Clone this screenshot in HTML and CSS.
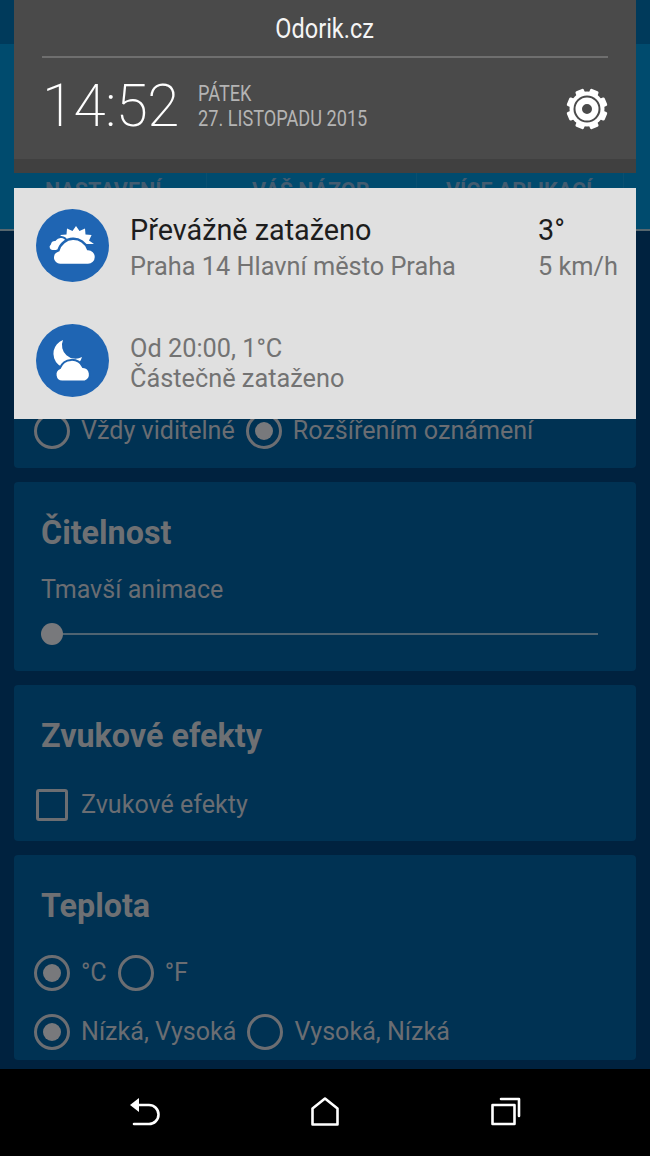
FILE: index.html
```html
<!DOCTYPE html>
<html lang="cs">
<head>
  <meta charset="UTF-8">
  <meta name="viewport" content="width=device-width, initial-scale=1.0">
  <title>Odorik.cz</title>
  <link rel="stylesheet" href="styles.css">
</head>
<body>
  <div class="app">
    <div class="top-bar"></div>
    <div class="tabs">
      <div class="tab tab-first">NASTAVENÍ</div>
      <div class="tab tab-second">VÁŠ NÁZOR</div>
      <div class="tab tab-third">VÍCE APLIKACÍ</div>
    </div>

    <div class="cards">
      <section class="card card-display">
        <div class="radio-row">
          <span class="radio"></span><span class="label">Vždy viditelné</span>
          <span class="radio checked"></span><span class="label">Rozšířením oznámení</span>
        </div>
      </section>

      <section class="card card-read">
        <h2 class="card-title">Čitelnost</h2>
        <p class="label slider-label">Tmavší animace</p>
        <div class="slider"><span class="slider-thumb"></span></div>
      </section>

      <section class="card card-sound">
        <h2 class="card-title">Zvukové efekty</h2>
        <div class="check-row">
          <span class="checkbox"></span><span class="label">Zvukové efekty</span>
        </div>
      </section>

      <section class="card card-temp">
        <h2 class="card-title">Teplota</h2>
        <div class="radio-row">
          <span class="radio checked"></span><span class="label">°C</span>
          <span class="radio"></span><span class="label">°F</span>
        </div>
        <div class="radio-row radio-row-last">
          <span class="radio checked"></span><span class="label">Nízká, Vysoká</span>
          <span class="radio"></span><span class="label">Vysoká, Nízká</span>
        </div>
      </section>
    </div>
  </div>

  <!-- Notification shade over the app -->
  <div class="shade">
    <div class="shade-panel">
      <div class="shade-title"><span class="narrow">Odorik.cz</span></div>
      <div class="shade-info">
        <div class="clock">14:52</div>
        <div class="date">
          <span class="narrow">PÁTEK</span>
          <span class="narrow">27. LISTOPADU 2015</span>
        </div>
        <svg class="gear" viewBox="0 0 42 42" width="42" height="42">
          <g fill="#fff">
            <rect x="16.5" y="0.5" width="9" height="41" rx="1.5" transform="rotate(22.5 21 21)"/>
            <rect x="16.5" y="0.5" width="9" height="41" rx="1.5" transform="rotate(67.5 21 21)"/>
            <rect x="16.5" y="0.5" width="9" height="41" rx="1.5" transform="rotate(112.5 21 21)"/>
            <rect x="16.5" y="0.5" width="9" height="41" rx="1.5" transform="rotate(157.5 21 21)"/>
            <circle cx="21" cy="21" r="17.5"/>
          </g>
          <circle cx="21" cy="21" r="13.5" fill="#4a4a4a"/>
          <circle cx="21" cy="21" r="8.25" fill="none" stroke="#fff" stroke-width="6.5"/>
        </svg>
      </div>
      <div class="shade-strip"></div>
    </div>

    <div class="weather">
      <div class="weather-row weather-now">
        <svg class="weather-icon" viewBox="0 0 73 73" width="73" height="73">
          <circle cx="36.5" cy="36.5" r="36.5" fill="#1f65b3"/>
          <polygon points="40,35 27,31.5 24.4,26 30.5,25.5 31,19.4 36.5,22 40,17 43.5,22 49,19.4 49.5,25.5 55.6,26 53,31.5 58,35" fill="#fff"/>
          <path d="M17 42a4 4 0 0 1-3-7 5 5 0 0 1 5-4 7 7 0 0 1 12 1 5 5 0 0 1 1 10z" fill="#fff" stroke="#1f65b3" stroke-width="2"/>
          <path d="M24 56a7.500 7.500 0 0 1-1.500-14.800A15.500 15.500 0 0 1 52 40A8 8 0 0 1 52 56z" fill="#fff" stroke="#1f65b3" stroke-width="2.500"/>
        </svg>
        <div class="weather-text">
          <div class="weather-title">Převážně zataženo</div>
          <div class="weather-sub">Praha 14 Hlavní město Praha</div>
        </div>
        <div class="weather-side">
          <div class="weather-title">3°</div>
          <div class="weather-sub">5 km/h</div>
        </div>
      </div>
      <div class="weather-row weather-next">
        <svg class="weather-icon" viewBox="0 0 73 73" width="73" height="73">
          <circle cx="36.5" cy="36.5" r="36.5" fill="#1f65b3"/>
          <path d="M27 16A14.500 14.500 0 1 0 46 33A13.500 13.500 0 0 1 27 16z" fill="#fff"/>
          <path d="M26 57.500A7 7 0 0 1 24 44A12.500 12.500 0 0 1 47 43A7.500 7.500 0 0 1 49 57.500z" fill="#fff" stroke="#1f65b3" stroke-width="2"/>
        </svg>
        <div class="weather-text">
          <div class="weather-sub">Od 20:00, 1°C</div>
          <div class="weather-sub">Částečně zataženo</div>
        </div>
      </div>
    </div>
  </div>

  <nav class="nav-bar">
    <svg class="nav-icon" viewBox="0 0 34 32" width="34" height="32">
      <path d="M3 8l9-7v14z" fill="#fff"/>
      <path d="M11 8h11a9.500 9.500 0 0 1 0 19H7" fill="none" stroke="#fff" stroke-width="2.600" stroke-linecap="round"/>
    </svg>
    <svg class="nav-icon" viewBox="0 0 34 32" width="34" height="32">
      <path d="M4.500 27.500V11.500L17 1.500l12.500 10v16z" fill="none" stroke="#fff" stroke-width="2.600" stroke-linejoin="round"/>
    </svg>
    <svg class="nav-icon" viewBox="0 0 34 32" width="34" height="32">
      <path d="M3.500 8h22v19h-22z" fill="none" stroke="#fff" stroke-width="2.600" stroke-linejoin="round"/>
      <path d="M12 2h18v17" fill="none" stroke="#fff" stroke-width="2.600" stroke-linecap="round" stroke-linejoin="round"/>
    </svg>
  </nav>
</body>
</html>
```

FILE: styles.css
```css
* {
  box-sizing: border-box;
}

html, body {
  margin: 0;
  padding: 0;
}

body {
  position: relative;
  display: flex;
  flex-direction: column;
  height: 1156px;
  overflow: hidden;
  background-color: #00223f;
  font-family: Roboto, "Noto Sans", sans-serif;
}

.app {
  flex: 1;
  overflow: hidden;
}

.top-bar {
  height: 44px;
  background-color: #003a5b;
}

.tabs {
  display: flex;
  height: 187px;
  padding: 0 14px;
  background-color: #004b6e;
  border-bottom: 2px solid #56676f;
  color: #435c70;
  font-size: 21.5px;
  font-weight: 700;
}

.tab {
  height: 100%;
  padding-top: 134px;
  border-right: 1px solid #0a4f70;
  white-space: nowrap;
}

.tab-first {
  width: 193px;
  padding-left: 31px;
}

.tab-second {
  width: 210px;
  padding-left: 45px;
}

.tab-third {
  width: 207px;
  padding-left: 29px;
}

.cards {
  display: flex;
  flex-direction: column;
  gap: 14px;
  padding: 13px 14px 0;
}

.card {
  padding: 0 27px;
  background-color: #003253;
  border-radius: 4px;
}

.card-display {
  height: 224px;
  display: flex;
  flex-direction: column;
  justify-content: flex-end;
  padding-bottom: 19px;
}

.card-read {
  height: 189px;
}

.card-sound {
  height: 156px;
}

.card-temp {
  height: 205px;
}

.card-title {
  margin: 31px 0 0;
  color: #6e7073;
  font-size: 32.300px;
  line-height: 40px;
  font-weight: 700;
}

.label {
  color: #6a6d72;
  font-size: 25.100px;
  line-height: 36px;
  white-space: nowrap;
}

.radio-row {
  display: flex;
  align-items: center;
  height: 36px;
  margin-left: -7px;
}

.radio {
  flex: none;
  position: relative;
  width: 36px;
  height: 36px;
  margin-right: 11px;
  border: 3px solid #6c6e72;
  border-radius: 50%;
}

.radio.checked::after {
  content: "";
  position: absolute;
  top: 6px;
  left: 6px;
  width: 18px;
  height: 18px;
  border-radius: 50%;
  background-color: #78797c;
}

.label + .radio {
  margin-left: 11px;
}

.slider-label {
  margin: 19px 0 0;
}

.slider {
  position: relative;
  height: 2px;
  margin: 25px 11px 0 0;
  background-color: #4f6472;
}

.slider-thumb {
  position: absolute;
  top: -10px;
  left: 0;
  width: 22px;
  height: 22px;
  border-radius: 50%;
  background-color: #78797c;
}

.check-row {
  display: flex;
  align-items: center;
  margin: 31px 0 0 -5px;
}

.checkbox {
  width: 32px;
  height: 32px;
  margin-right: 13px;
  border: 3px solid #6c6e72;
  border-radius: 3px;
}

.card-temp .radio-row {
  margin-top: 29px;
}

.card-temp .radio-row-last {
  margin-top: 23px;
}

/* Notification shade */
.shade {
  position: absolute;
  top: 0;
  left: 14px;
  width: 622px;
}

.shade-panel {
  height: 173px;
  background-color: #4a4a4a;
}

.shade-title {
  height: 58px;
  margin: 0 28px;
  padding-top: 13px;
  border-bottom: 2px solid #6f6f6f;
  color: #f5f5f5;
  font-size: 27px;
  line-height: 33px;
  text-align: center;
}

.narrow {
  display: inline-block;
  transform: scaleX(0.87);
}

.shade-info {
  display: flex;
  align-items: center;
  height: 101px;
  padding: 0 28px 5px 28px;
}

.gear {
  position: relative;
  top: 2.500px;
  margin-left: auto;
}

.clock {
  color: #fff;
  font-size: 58.300px;
  font-weight: 200;
  line-height: 70px;
  letter-spacing: -0.5px;
}

.date {
  display: flex;
  flex-direction: column;
  align-items: flex-start;
  margin-left: 19px;
  color: #b4b4b4;
  font-size: 22px;
  line-height: 25px;
}

.date .narrow {
  transform: scaleX(0.825);
  transform-origin: left center;
}

.shade-strip {
  height: 14px;
  background-color: #404040;
}

.weather {
  height: 231px;
  margin-top: 15px;
  background-color: #e0e0e0;
}

.weather-row {
  display: flex;
  padding-left: 21.5px;
}

.weather-now {
  height: 136px;
  padding-top: 21px;
}

.weather-next {
  height: 95px;
}

.weather-icon {
  flex: none;
}

.weather-text {
  flex: 1;
  margin-left: 21.5px;
}

.weather-now .weather-text {
  padding-top: 5px;
}

.weather-next .weather-text {
  padding-top: 10px;
}

.weather-side {
  width: 98px;
  padding-top: 5px;
}

.weather-title {
  color: #1d1d1d;
  font-size: 28.800px;
  line-height: 32px;
}

.weather-sub {
  color: #737373;
  font-size: 25.300px;
  line-height: 42px;
}

.weather-next .weather-sub {
  line-height: 30px;
}

.nav-bar {
  display: flex;
  flex: none;
  align-items: flex-start;
  justify-content: space-between;
  height: 87px;
  padding: 28px 127px 0;
  background-color: #000;
}
```
